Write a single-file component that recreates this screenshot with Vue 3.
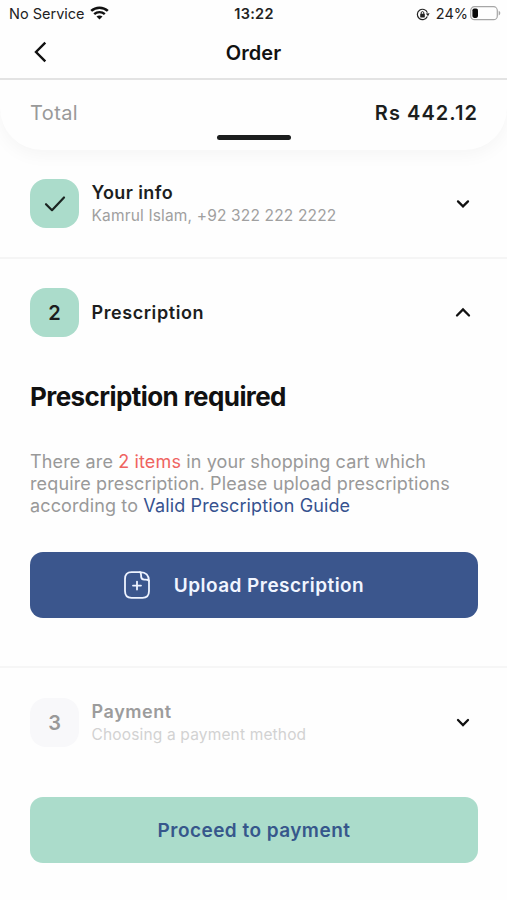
<script setup>
const total = 'Rs 442.12'
</script>

<template>
  <main class="screen">
    <header class="top">
      <div class="status">
        <div class="network">
          <span class="carrier">No Service</span>
          <svg class="wifi" width="19" height="14" viewBox="0 0 19 14" fill="none" stroke="#111">
            <path d="M1.2 4.9C5.8.6 13.2.6 17.8 4.9" stroke-width="2.6" />
            <path d="M4.2 8.2c3-2.8 7.6-2.8 10.6 0" stroke-width="2.4" />
            <path d="M9.5 13.6 6.500 10.600c1.600-1.600 4.400-1.600 6 0z" fill="#111" stroke="none" />
          </svg>
        </div>
        <span class="clock">13:22</span>
        <div class="power">
          <svg class="lock" width="14" height="13" viewBox="0 0 14 13" fill="none" stroke="#222">
            <path d="M11.3 8.6a5.2 5.2 0 1 1 .1-4" stroke-width="1.2" />
            <path d="m9.8 5.4 3.8-.1-1.6 3z" fill="#222" stroke="none" />
            <rect x="4.2" y="5.8" width="4.6" height="3.6" rx=".6" fill="#222" stroke="none" />
            <path d="M5.2 6V4.9a1.3 1.3 0 0 1 2.6 0V6" stroke-width="1" />
          </svg>
          <span class="percent">24%</span>
          <svg class="battery" width="31" height="15" viewBox="0 0 31 15">
            <rect x=".7" y=".7" width="26.6" height="13" rx="3.8" fill="none" stroke="#a6a6a6" stroke-width="1.2" />
            <rect x="2.4" y="2.5" width="5.6" height="9.4" rx="1.8" fill="#080808" />
            <path d="M28.7 4.8c2.1.7 2.1 4 0 4.7z" fill="#a6a6a6" />
          </svg>
        </div>
      </div>
      <div class="navbar">
        <svg class="back" width="14" height="22" viewBox="0 0 14 22" fill="none" stroke="#111" stroke-width="2.4">
          <path d="M12.3 1.7 3 11l9.3 9.3" />
        </svg>
        <h1 class="title">Order</h1>
      </div>
    </header>

    <section class="summary">
      <div class="amounts">
        <span class="label">Total</span>
        <strong class="sum">{{ total }}</strong>
      </div>
      <div class="handle"></div>
    </section>

    <section class="step info">
      <div class="row">
        <div class="badge">
          <svg width="22" height="18" viewBox="0 0 22 18" fill="none" stroke="#1b2421" stroke-width="2.2" stroke-linecap="round" stroke-linejoin="round">
            <path d="m2 9.2 6 6L20 2.5" />
          </svg>
        </div>
        <div class="words">
          <h2 class="name your">Your info</h2>
          <p class="detail">Kamrul Islam, +92 322 222 2222</p>
        </div>
        <svg class="chevron" width="16" height="12" viewBox="0 0 16 12" fill="none" stroke="#111" stroke-width="2.3" stroke-linecap="round">
          <path d="m3 3.4 5 5 5-5" />
        </svg>
      </div>
    </section>

    <section class="step prescription">
      <div class="row">
        <div class="badge">2</div>
        <div class="words">
          <h2 class="name">Prescription</h2>
        </div>
        <svg class="chevron" width="16" height="12" viewBox="0 0 16 12" fill="none" stroke="#111" stroke-width="2.3" stroke-linecap="round">
          <path d="m2 8.500 6-6 6 6" />
        </svg>
      </div>
      <h3 class="heading">Prescription required</h3>
      <p class="message">
        There are <em>2 items</em> in your shopping cart which<br />
        require prescription. Please upload prescriptions<br />
        according to <a>Valid Prescription Guide</a>
      </p>
      <button class="button upload">
        <svg width="26" height="28" viewBox="0 0 26 28" fill="none" stroke="#eef3ff" stroke-width="1.8" stroke-linecap="round" stroke-linejoin="round">
          <path d="M16 1.2H7.5Q1 1.2 1 8v12q0 6.8 6.5 6.8h11q6.5 0 6.5-6.8V9.8" />
          <path d="M16 1.2q4.6.1 6.7 2.2T25 9.8q-1.2-1.2-3.500-1.200h-1.200q-3.200 0-3.200-3.300V4.300q0-2-1.100-3.100" />
          <path d="M13 10.600v8M9 14.600h8" />
        </svg>
        <span>Upload Prescription</span>
      </button>
    </section>

    <section class="step payment">
      <div class="row">
        <div class="badge idle">3</div>
        <div class="words">
          <h2 class="name muted">Payment</h2>
          <p class="detail faint">Choosing a payment method</p>
        </div>
        <svg class="chevron" width="16" height="12" viewBox="0 0 16 12" fill="none" stroke="#111" stroke-width="2.3" stroke-linecap="round">
          <path d="m3 3 5 5 5-5" />
        </svg>
      </div>
      <button class="button proceed">Proceed to payment</button>
    </section>
  </main>
</template>

<style>
body {
  background: #fefefe;
}
</style>

<style scoped>
* {
  box-sizing: border-box;
}
.screen {
  width: 507px;
  height: 900px;
  overflow: hidden;
  background: #fefefe;
  color: #1c1e1e;
  font-family: Inter, "Liberation Sans", sans-serif;
}
h1, h2, h3, p {
  margin: 0;
}
.top {
  height: 80px;
  border-bottom: 2px solid #e3e3e3;
}
.status {
  display: grid;
  grid-template-columns: 1fr auto 1fr;
  align-items: center;
  height: 28px;
  padding: 0 6px 0 9px;
  font-size: 14.5px;
  line-height: 18px;
  color: #222;
}
.network, .power {
  display: flex;
  align-items: center;
}
.wifi {
  margin: -2px 0 0 5px;
}
.clock {
  margin-right: 2px;
  font-weight: 600;
  letter-spacing: 0.3px;
}
.power {
  justify-content: flex-end;
}
.percent {
  margin: 0 2px 0 6px;
}
.battery {
  margin-top: -1px;
}
.navbar {
  display: grid;
  grid-template-columns: 60px 1fr 60px;
  align-items: center;
  height: 48px;
}
.back {
  margin-left: 33px;
}
.title {
  padding-top: 1px;
  text-align: center;
  font-size: 20px;
  font-weight: 600;
  line-height: 24px;
  letter-spacing: 0.1px;
  color: #111;
}
.summary {
  height: 70px;
  padding: 20px 30px 0;
  border-radius: 0 0 42px 42px;
  background: #fefefe;
  box-shadow: 0 5px 18px rgba(0, 0, 0, 0.04);
  clip-path: inset(0 -20px -30px);
}
.amounts {
  display: flex;
  justify-content: space-between;
  font-size: 20px;
  line-height: 26px;
}
.label {
  letter-spacing: 0.4px;
  color: #999;
}
.sum {
  margin-right: -1px;
  font-weight: 600;
  letter-spacing: 1.05px;
}
.handle {
  width: 74px;
  height: 5px;
  margin: 9px auto 0;
  border-radius: 3px;
  background: #1c1e1e;
}
.step {
  padding: 0 30px;
}
.info {
  height: 109px;
  padding-top: 29px;
  border-bottom: 2px solid #f5f5f5;
}
.prescription {
  height: 409px;
  padding-top: 29px;
  border-bottom: 2px solid #f6f6f6;
}
.payment {
  padding-top: 30px;
}
.row {
  display: flex;
  align-items: center;
  height: 49px;
}
.badge {
  display: flex;
  align-items: center;
  justify-content: center;
  width: 49px;
  height: 49px;
  border-radius: 16px;
  background: #abdccb;
  font-size: 20px;
  font-weight: 600;
}
.idle {
  background: #f8f8fa;
  color: #999;
}
.words {
  flex: 1;
  padding-left: 12.5px;
}
.name {
  font-size: 18px;
  font-weight: 600;
  line-height: 24px;
  letter-spacing: 0.57px;
}
.your {
  letter-spacing: 0.4px;
}
.detail {
  font-size: 15.5px;
  line-height: 22px;
  letter-spacing: 0.16px;
  color: #a0a0a0;
}
.muted {
  color: #9c9c9c;
}
.faint {
  color: #d2d2d2;
}
.chevron {
  margin-right: 6px;
}
.heading {
  margin-top: 44px;
  font-size: 26px;
  font-weight: 700;
  line-height: 32px;
  letter-spacing: -0.58px;
  color: #111;
  white-space: nowrap;
}
.message {
  margin-top: 38px;
  font-size: 18px;
  line-height: 22px;
  letter-spacing: 0.13px;
  color: #999;
  white-space: nowrap;
}
.message em {
  font-style: normal;
  color: #ef6461;
}
.message a {
  color: #36528f;
}
.button {
  display: flex;
  align-items: center;
  justify-content: center;
  width: 448px;
  height: 66px;
  padding: 0;
  border: 0;
  border-radius: 13px;
  font-family: inherit;
  font-size: 19px;
  font-weight: 600;
  letter-spacing: 0.46px;
}
.upload {
  gap: 24px;
  margin-top: 35px;
  padding-right: 20px;
  background: #3b568d;
  color: #f1f5ff;
}
.proceed {
  margin-top: 50px;
  background: #abdccb;
  color: #36578b;
}
</style>
